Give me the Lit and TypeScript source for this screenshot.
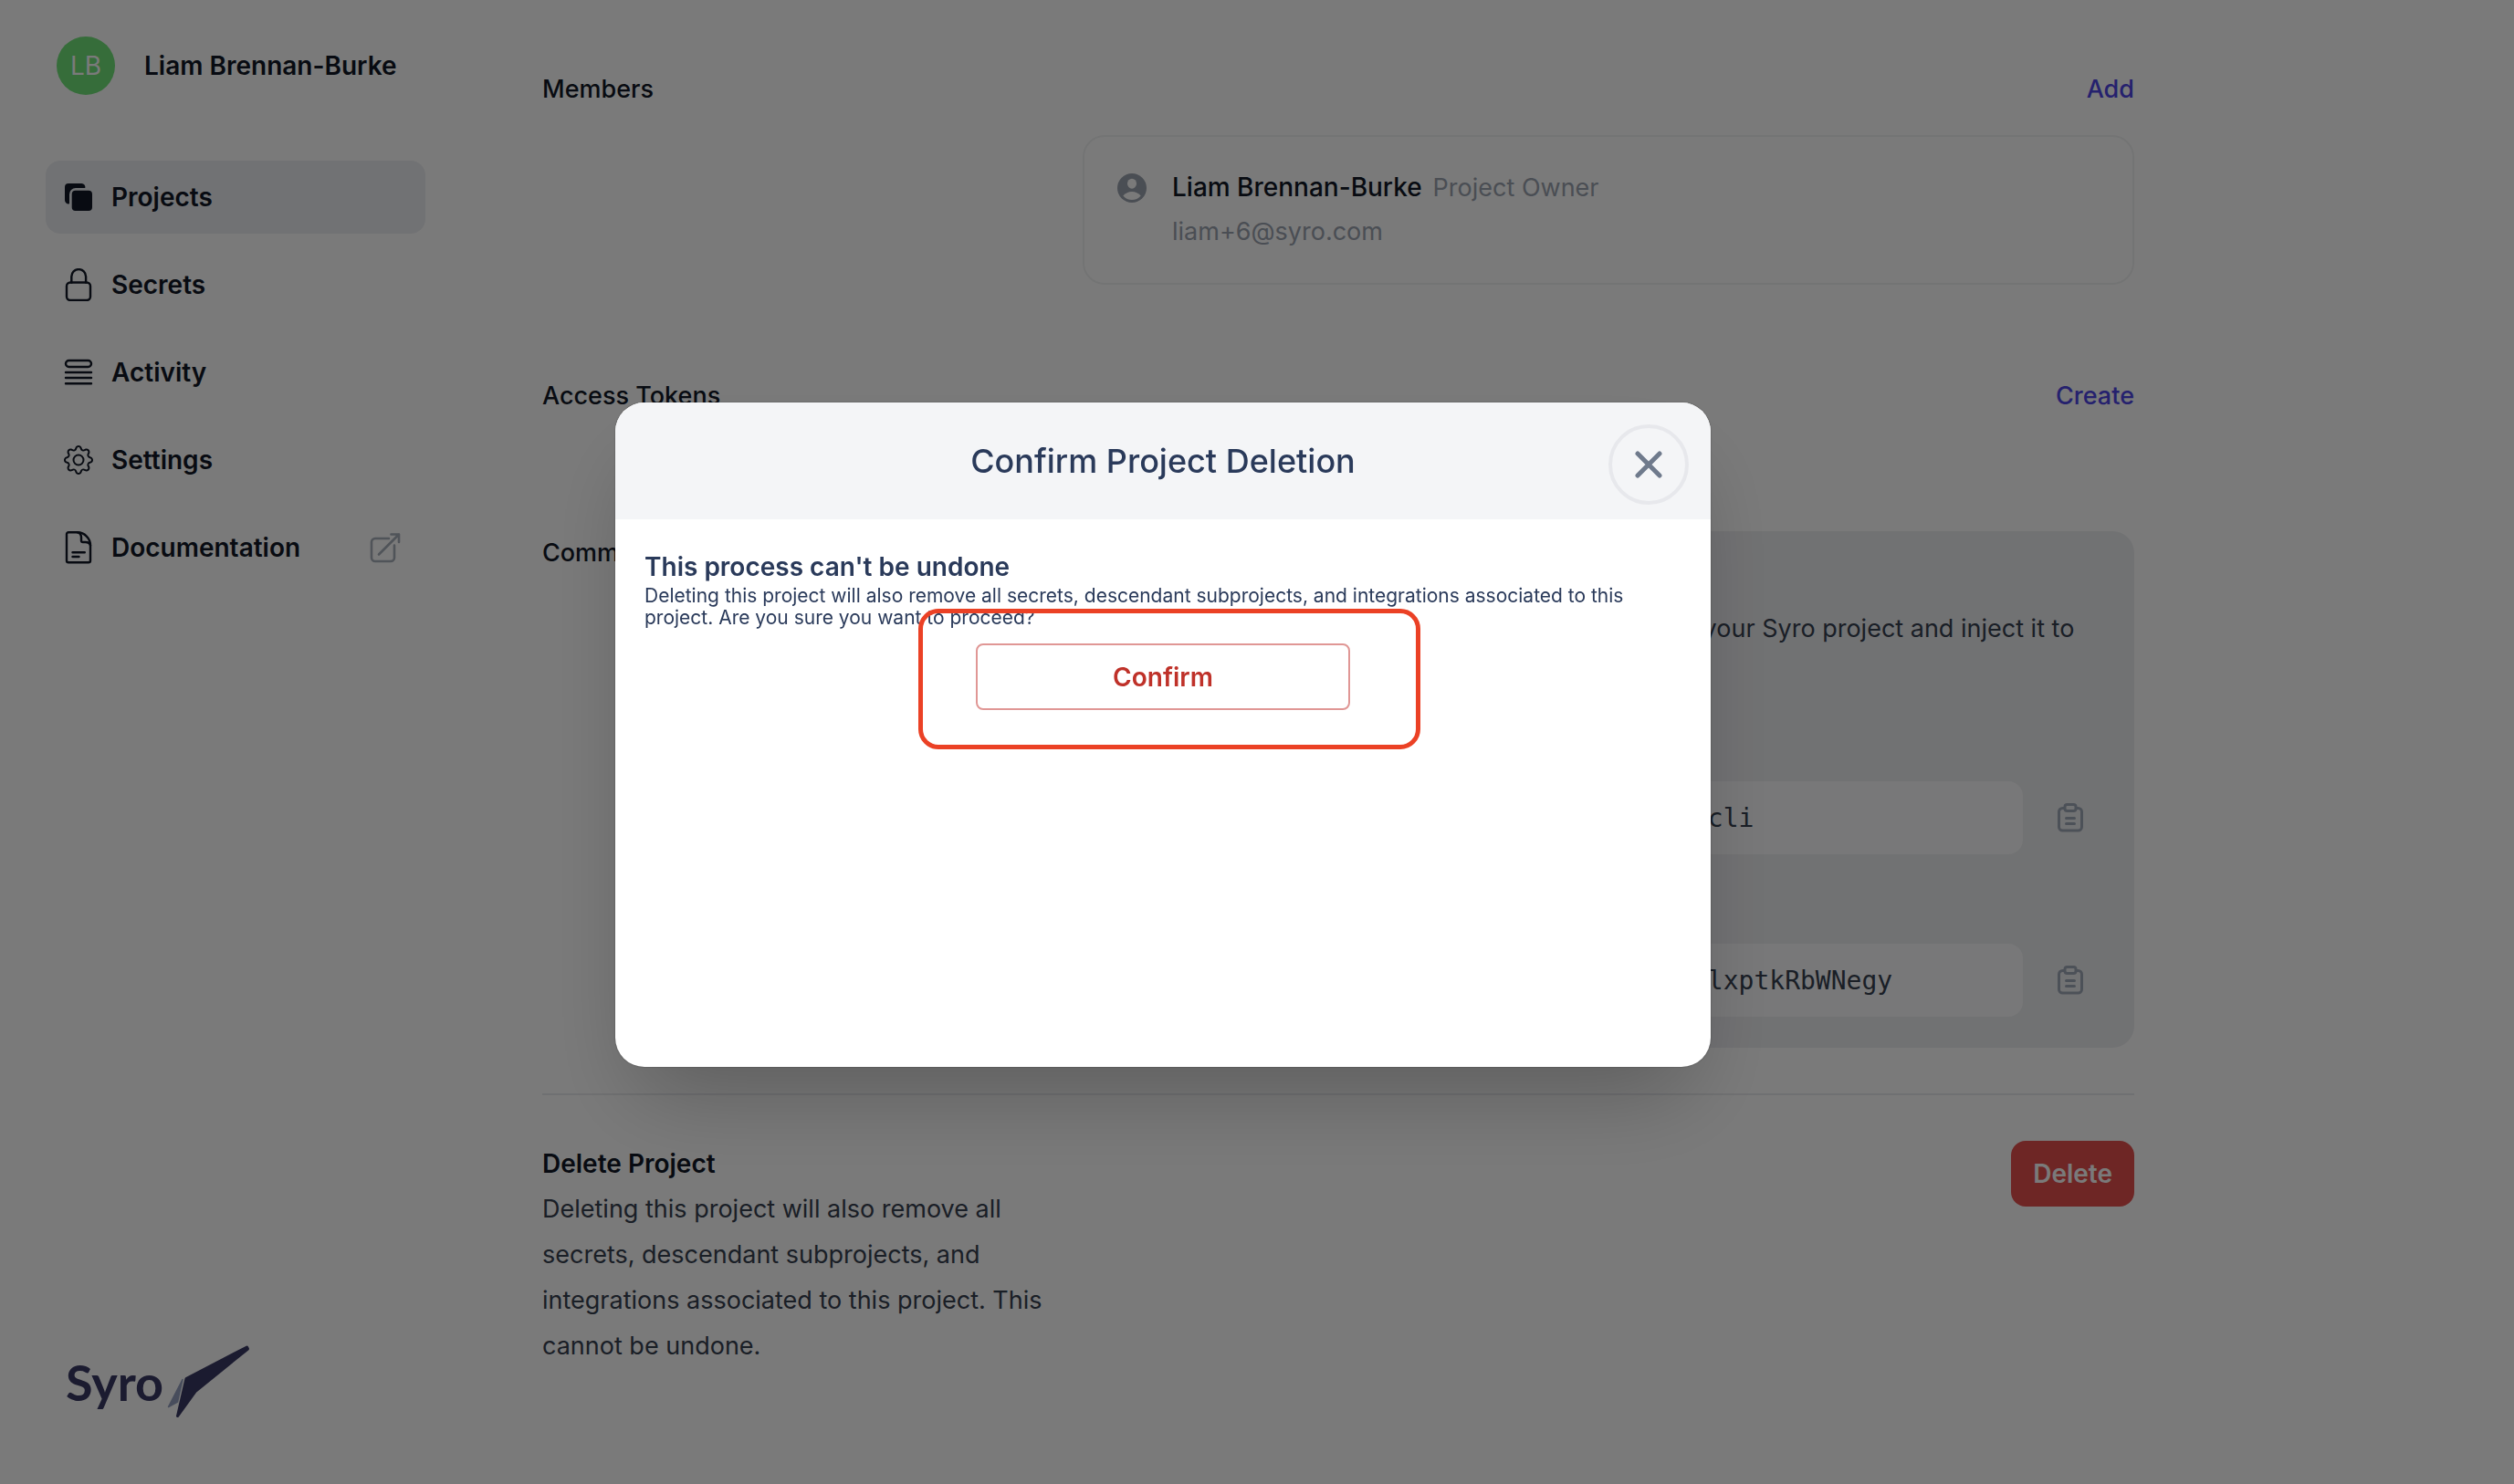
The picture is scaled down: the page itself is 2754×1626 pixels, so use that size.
import { LitElement, html, css, svg, nothing, type SVGTemplateResult } from "lit";
import { customElement, property } from "lit/decorators.js";

const navIcons: Record<string, SVGTemplateResult> = {
  projects: svg`<g fill="currentColor" stroke="none">
    <path d="M23.300 8A4 4 0 0 0 19.300 3H5A4 4 0 0 0 1 7v14.300a4 4 0 0 0 5 4V15a7 7 0 0 1 7-7z"/>
    <rect x="8.700" y="10.700" width="22.300" height="22.300" rx="4"/></g>`,
  secrets: svg`<rect x="3" y="15.500" width="26" height="19.500" rx="4"/>
    <path d="M8.300 15.500V9a7.900 7.900 0 0 1 15.800 0v6.500"/>`,
  activity: svg`<rect x="2" y="5" width="28" height="7" rx="3.500"/>
    <path d="M2 18h28M2 24h28M2 30.300h28"/>`,
  settings: svg`<g fill="currentColor" stroke="none" transform="translate(0 2) scale(2)">
    <path d="M8 4.754a3.246 3.246 0 1 0 0 6.492 3.246 3.246 0 0 0 0-6.492zM5.754 8a2.246 2.246 0 1 1 4.492 0 2.246 2.246 0 0 1-4.492 0z"/>
    <path d="M9.796 1.343c-.527-1.79-3.065-1.79-3.592 0l-.094.319a.873.873 0 0 1-1.255.52l-.292-.16c-1.64-.892-3.433.902-2.54 2.541l.159.292a.873.873 0 0 1-.52 1.255l-.319.094c-1.79.527-1.79 3.065 0 3.592l.319.094a.873.873 0 0 1 .52 1.255l-.16.292c-.892 1.64.901 3.434 2.541 2.54l.292-.159a.873.873 0 0 1 1.255.52l.094.319c.527 1.79 3.065 1.79 3.592 0l.094-.319a.873.873 0 0 1 1.255-.52l.292.16c1.64.893 3.434-.902 2.54-2.541l-.159-.292a.873.873 0 0 1 .52-1.255l.319-.094c1.79-.527 1.79-3.065 0-3.592l-.319-.094a.873.873 0 0 1-.52-1.255l.16-.292c.893-1.64-.902-3.433-2.541-2.54l-.292.159a.873.873 0 0 1-1.255-.52l-.094-.319zm-2.633.283c.246-.835 1.428-.835 1.674 0l.094.319a1.873 1.873 0 0 0 2.693 1.115l.291-.16c.764-.415 1.6.42 1.184 1.185l-.159.292a1.873 1.873 0 0 0 1.116 2.692l.318.094c.835.246.835 1.428 0 1.674l-.319.094a1.873 1.873 0 0 0-1.115 2.693l.16.291c.415.764-.42 1.6-1.185 1.184l-.291-.159a1.873 1.873 0 0 0-2.693 1.116l-.094.318c-.246.835-1.428.835-1.674 0l-.094-.319a1.873 1.873 0 0 0-2.692-1.115l-.292.16c-.764.415-1.6-.42-1.184-1.185l.159-.291A1.873 1.873 0 0 0 1.945 8.93l-.319-.094c-.835-.246-.835-1.428 0-1.674l.319-.094A1.873 1.873 0 0 0 3.06 4.377l-.16-.292c-.415-.764.42-1.6 1.185-1.184l.292.159a1.873 1.873 0 0 0 2.692-1.115l.094-.319z"/></g>`,
  documentation: svg`<path d="M15 1.300H5a2 2 0 0 0-2 2v29a2 2 0 0 0 2 2h22a2 2 0 0 0 2-2V15.500C29 8 22.500 1.300 15 1.300"/>
    <path d="M15 1.300c2.600.700 4 3 4 5.500v3.400a1.800 1.800 0 0 0 1.800 1.800h2.700c2.700 0 4.900 1.200 5.500 3.500"/>
    <path d="M9.500 23.300h13.300M9.500 28h7"/>`,
};

@customElement("nav-link")
export class NavLink extends LitElement {
  @property() label = "";
  @property() icon = "projects";
  @property({ type: Boolean }) current = false;
  @property({ type: Boolean }) external = false;

  static styles = css`
    :host { display: block; }
    .link {
      display: flex;
      align-items: center;
      gap: 20px;
      height: 80px;
      padding: 0 28px 0 20px;
      border-radius: 16px;
      color: #111827;
      text-decoration: none;
      box-sizing: border-box;
    }
    .current { background: #edeff2; }
    .label { flex: 1; }
    .icon { width: 32px; height: 36px; flex: none; }
    .out { width: 32px; height: 32px; color: #a8afba; overflow: visible; }
  `;

  render() {
    return html`<a class="link ${this.current ? "current" : ""}" href="#${this.icon}">
      <svg class="icon" viewBox="0 0 32 36" fill="none" stroke="currentColor" stroke-width="2.400"
        stroke-linecap="round" stroke-linejoin="round" aria-hidden="true">${navIcons[this.icon]}</svg>
      <span class="label">${this.label}</span>
      ${this.external
        ? html`<svg class="out" viewBox="0 0 32 32" fill="none" stroke="currentColor" stroke-width="2.600"
            stroke-linecap="round" stroke-linejoin="round" aria-hidden="true">
            <path d="M20 6H5a4 4 0 0 0-4 4v17a4 4 0 0 0 4 4h17a4 4 0 0 0 4-4V13.500M9 23.500L31 1.500M22.500 1.500H31V10"/>
          </svg>`
        : nothing}
    </a>`;
  }
}

@customElement("copy-field")
export class CopyField extends LitElement {
  @property() label = "";
  @property() value = "";

  static styles = css`
    :host { display: block; }
    .label { display: block; line-height: 50px; color: #374151; }
    .row { display: flex; align-items: center; gap: 30px; }
    .input {
      flex: 1;
      min-width: 0;
      height: 80px;
      box-sizing: border-box;
      padding: 0 30px;
      border: 0;
      border-radius: 16px;
      background: #fafbfc;
      color: #374151;
      font: 28px/40px "DejaVu Sans Mono", monospace;
    }
    .copy {
      width: 44px;
      padding: 0;
      border: 0;
      background: none;
      color: #a0a9b8;
      display: flex;
      justify-content: center;
    }
    .icon { width: 28px; height: 32px; }
  `;

  render() {
    return html`
      <label class="label" for="value">${this.label}</label>
      <div class="row">
        <input class="input" id="value" readonly .value=${this.value} />
        <button class="copy" type="button" aria-label="Copy">
          <svg class="icon" viewBox="0 0 28 32" fill="none" stroke="currentColor" stroke-width="3"
            stroke-linecap="round" stroke-linejoin="round">
            <path d="M7.500 5.500h-2a4 4 0 0 0-4 4v16.500a4 4 0 0 0 4 4h17a4 4 0 0 0 4-4V9.500a4 4 0 0 0-4-4h-2"/>
            <rect x="8" y="1.500" width="12" height="7" rx="2.500"/>
            <path d="M9.500 16.500h9M9.500 22.500h9"/>
          </svg>
        </button>
      </div>`;
  }
}

@customElement("confirm-dialog")
export class ConfirmDialog extends LitElement {
  static styles = css`
    :host {
      position: fixed;
      inset: 0;
      display: grid;
      place-items: center;
      padding: 0 206px 16px 0;
      background: rgba(0, 0, 0, 0.52);
      color: #2a3a5a;
    }
    .dialog {
      position: relative;
      width: 1200px;
      max-width: 100%;
      min-height: 728px;
      border-radius: 32px;
      background: #fff;
      box-shadow: 0 50px 100px -24px rgba(0, 0, 0, 0.25), 0 0 2px rgba(0, 0, 0, 0.4);
    }
    .head {
      display: grid;
      place-items: center;
      height: 128px;
      border-radius: 32px 32px 0 0;
      background: #f4f5f7;
    }
    .title { margin: 0; font-size: 36px; line-height: 48px; font-weight: 500; }
    .close {
      position: absolute;
      top: 24px;
      right: 24px;
      width: 88px;
      height: 88px;
      padding: 0;
      border: 4px solid #e7e8ec;
      border-radius: 50%;
      background: none;
      color: #6f7a8c;
      display: grid;
      place-items: center;
    }
    .cross { width: 32px; height: 32px; }
    .body { padding: 32px; }
    .subtitle { margin: 0; font-size: 28px; line-height: 40px; font-weight: 600; }
    .text { margin: 0; font-size: 21px; line-height: 24px; }
    .confirm {
      display: block;
      width: 410px;
      height: 73px;
      margin: 16px auto 0;
      border: 2px solid #e09795;
      border-radius: 8px;
      background: #fff;
      color: #bf3129;
      font: 600 28px/40px Inter, sans-serif;
    }
    .highlight {
      position: absolute;
      left: 332px;
      top: 226px;
      width: 550px;
      height: 154px;
      box-sizing: border-box;
      border: 5px solid #eb4125;
      border-radius: 22px;
      pointer-events: none;
    }
  `;

  render() {
    return html`
      <div class="dialog" role="dialog" aria-modal="true" aria-labelledby="title">
        <div class="head"><h2 class="title" id="title">Confirm Project Deletion</h2></div>
        <button class="close" type="button" aria-label="Close">
          <svg class="cross" viewBox="0 0 32 32" fill="none" stroke="currentColor" stroke-width="5"
            stroke-linecap="round"><path d="M4 4l24 24M28 4L4 28"/></svg>
        </button>
        <div class="body">
          <h3 class="subtitle">This process can't be undone</h3>
          <p class="text">Deleting this project will also remove all secrets, descendant subprojects, and
            integrations associated to this project. Are you sure you want to proceed?</p>
          <button class="confirm" type="button">Confirm</button>
        </div>
        <div class="highlight"></div>
      </div>`;
  }
}

@customElement("app-root")
export class AppRoot extends LitElement {
  static styles = css`
    :host {
      display: block;
      font: 400 27px/40px Inter, sans-serif;
      color: #111827;
      background: #fff;
    }
    .layout { display: flex; min-height: 100vh; }
    .sidebar {
      flex: none;
      width: 498px;
      box-sizing: border-box;
      padding: 40px 32px 72px 50px;
      display: flex;
      flex-direction: column;
      justify-content: space-between;
      font-size: 28px;
      font-weight: 600;
    }
    .user { display: flex; align-items: center; gap: 32px; padding-left: 12px; margin-bottom: 72px; }
    .avatar {
      width: 64px;
      height: 64px;
      border-radius: 50%;
      background: #71e37a;
      color: #fff;
      display: grid;
      place-items: center;
      font-weight: 400;
    }
    .nav { display: grid; gap: 16px; }
    .brand {
      display: flex;
      align-items: flex-end;
      gap: 4px;
      padding-left: 22px;
      color: #3a3a64;
      text-decoration: none;
    }
    .wordmark { font: 700 54px/78px Lato, sans-serif; }
    .mark { width: 92px; height: 80px; }
    .main {
      flex: 1;
      min-width: 0;
      max-width: 1744px;
      padding: 78px 96px;
    }
    .grid { display: grid; grid-template-columns: repeat(3, minmax(0, 1fr)); column-gap: 32px; }
    .bar { display: flex; justify-content: space-between; }
    .heading { margin: 0; font-size: 27px; line-height: 40px; font-weight: 500; }
    .action { padding: 0; border: 0; background: none; color: #4f46e5; font: 500 27px/40px Inter, sans-serif; }
    .wide { grid-column: 2 / 4; }
    .member {
      display: flex;
      gap: 28px;
      margin-top: 30px;
      padding: 32px 36px;
      border: 2px solid #f1f2f3;
      border-radius: 24px;
      color: #9ca3af;
      line-height: 48px;
    }
    .face { width: 32px; height: 32px; margin-top: 8px; flex: none; }
    .name { color: #111827; font-size: 28px; line-height: 40px; font-weight: 500; margin-right: 12px; }
    .tokens { margin-top: 102px; }
    .cli { margin-top: 128px; }
    .cli-title { line-height: 48px; }
    .panel {
      display: grid;
      padding: 32px 48px 34px;
      border-radius: 24px;
      background: #edeef1;
      color: #374151;
      line-height: 50px;
    }
    .panel-title { margin: 0; font-size: 27px; font-weight: 500; }
    .para { margin: 0 0 42px; }
    .second { margin-top: 48px; }
    .danger { margin-top: 50px; padding-top: 50px; border-top: 2px solid #e9ebee; }
    .danger-title { margin: 0; font-size: 28px; line-height: 50px; font-weight: 600; }
    .danger-text { margin: 0; line-height: 50px; color: #374151; }
    .danger-side { display: flex; justify-content: flex-end; align-items: flex-start; }
    .delete {
      height: 72px;
      padding: 0 24px;
      border: 0;
      border-radius: 16px;
      background: #e5514f;
      color: #fff;
      font: 600 28px/40px Inter, sans-serif;
    }
  `;

  render() {
    return html`
      <div class="layout">
        <aside class="sidebar">
          <div>
            <div class="user"><span class="avatar">LB</span><span>Liam Brennan-Burke</span></div>
            <nav class="nav">
              <nav-link label="Projects" icon="projects" current></nav-link>
              <nav-link label="Secrets" icon="secrets"></nav-link>
              <nav-link label="Activity" icon="activity"></nav-link>
              <nav-link label="Settings" icon="settings"></nav-link>
              <nav-link label="Documentation" icon="documentation" external></nav-link>
            </nav>
          </div>
          <a class="brand" href="#home">
            <span class="wordmark">Syro</span>
            <svg class="mark" viewBox="0 0 92 80" aria-hidden="true" stroke-linejoin="round">
              <path d="M87.500 2L21 36.500 11.500 77.500 31 50.500 88.500 4Z" fill="#3a3a64" stroke="#3a3a64" stroke-width="3"/>
              <path d="M17 37.500L1.500 67.500 11.500 62Z" fill="#96a2c0" stroke="#96a2c0" stroke-width="1.500"/>
            </svg>
          </a>
        </aside>
        <main class="main">
          <section>
            <div class="bar">
              <h2 class="heading">Members</h2>
              <button class="action" type="button">Add</button>
            </div>
            <div class="grid">
              <div class="wide member">
                <svg class="face" viewBox="0 0 32 32" aria-hidden="true">
                  <circle cx="16" cy="16" r="16" fill="currentColor"/>
                  <ellipse cx="16" cy="11.200" rx="5" ry="5.500" fill="#fff"/>
                  <path d="M6.300 24.500C9 21.500 12 20 16 20s7 1.500 9.700 4.500C23 27.600 20 29 16 29s-7-1.400-9.700-4.500z" fill="#fff"/>
                </svg>
                <div>
                  <div><span class="name">Liam Brennan-Burke</span><span>Project Owner</span></div>
                  <div>liam+6@syro.com</div>
                </div>
              </div>
            </div>
          </section>
          <section class="tokens bar">
            <h2 class="heading">Access Tokens</h2>
            <button class="action" type="button">Create</button>
          </section>
          <section class="cli grid">
            <h2 class="heading cli-title">Command Line</h2>
            <div class="wide panel">
              <h3 class="panel-title">Syro CLI</h3>
              <p class="para">Use the Syro command line to fetch secrets from your Syro project and
                inject it to your application at runtime.</p>
              <copy-field label="Install" value="npm install --global @syrolabs/syro-cli"></copy-field>
              <copy-field class="second" label="Set up" value="syro setup --project pk_8Qw3ZtVnA7mJlxptkRbWNegy"></copy-field>
            </div>
          </section>
          <section class="danger grid">
            <div>
              <h2 class="danger-title">Delete Project</h2>
              <p class="danger-text">Deleting this project will also remove all secrets, descendant
                subprojects, and integrations associated to this project. This cannot be undone.</p>
            </div>
            <div class="wide danger-side"><button class="delete" type="button">Delete</button></div>
          </section>
        </main>
      </div>
      <confirm-dialog></confirm-dialog>`;
  }
}
